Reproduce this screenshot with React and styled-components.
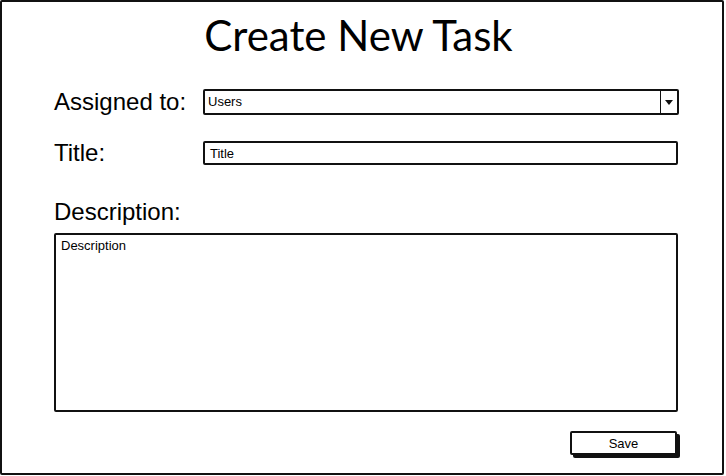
import React from "react";
import styled, { createGlobalStyle } from "styled-components";

const GlobalStyle = createGlobalStyle`
  html, body {
    margin: 0;
    padding: 0;
    background: #fff;
  }
  body {
    font-family: "Liberation Sans", Arial, sans-serif;
    color: #000;
  }
`;

const Frame = styled.div`
  box-sizing: border-box;
  width: 724px;
  height: 475px;
  border: 2px solid #111;
  border-radius: 2px;
  padding: 10px 43px 0 52px;
  display: flex;
  flex-direction: column;
`;

const Heading = styled.h1`
  margin: 0;
  padding-right: 16px;
  font-family: Lato, "Open Sans", sans-serif;
  font-weight: 400;
  font-size: 42px;
  line-height: 47px;
  text-align: center;
`;

const FieldRow = styled.div`
  display: flex;
  align-items: center;
  margin-top: ${(p) => p.$top}px;
`;

const Label = styled.label`
  width: 149px;
  flex: none;
  font-size: 24px;
  line-height: 26px;
`;

const BlockLabel = styled(Label)`
  display: block;
  width: auto;
  margin-top: 33px;
`;

const Box = styled.div`
  box-sizing: border-box;
  border: 2px solid #111;
  border-radius: 2px;
  background: #fff;
  font-size: 13px;
`;

const Select = styled(Box)`
  width: 476px;
  height: 26px;
  display: flex;
  align-items: stretch;
`;

const SelectValue = styled.span`
  flex: 1;
  padding: 3px 0 0 3px;
`;

const Caret = styled.span`
  width: 16px;
  border-left: 1.5px solid #111;
  display: flex;
  align-items: center;
  justify-content: center;
`;

const Input = styled(Box)`
  width: 475px;
  height: 24px;
  padding: 3px 0 0 5px;
`;

const TextArea = styled(Box)`
  margin-top: 8px;
  width: 624px;
  height: 179px;
  padding: 3px 0 0 5px;
`;

const Footer = styled.div`
  display: flex;
  justify-content: flex-end;
  margin-top: 19px;
  padding-right: 2px;
`;

const Button = styled.button`
  box-sizing: border-box;
  width: 107px;
  height: 24px;
  border: 2px solid #111;
  border-radius: 2px;
  background: #fff;
  box-shadow: 3px 3px 0 #111;
  font-family: "Liberation Sans", Arial, sans-serif;
  font-size: 13px;
  color: #000;
  padding: 0;
`;

export default function App() {
  return (
    <>
      <GlobalStyle />
      <Frame>
        <Heading>Create New Task</Heading>
        <FieldRow $top={30}>
          <Label>Assigned to:</Label>
          <Select>
            <SelectValue>Users</SelectValue>
            <Caret>
              <svg width="8" height="5" viewBox="0 0 8 5">
                <path d="M0 0 H8 L4 5 Z" fill="#111" />
              </svg>
            </Caret>
          </Select>
        </FieldRow>
        <FieldRow $top={25}>
          <Label>Title:</Label>
          <Input>Title</Input>
        </FieldRow>
        <BlockLabel>Description:</BlockLabel>
        <TextArea>Description</TextArea>
        <Footer>
          <Button>Save</Button>
        </Footer>
      </Frame>
    </>
  );
}
